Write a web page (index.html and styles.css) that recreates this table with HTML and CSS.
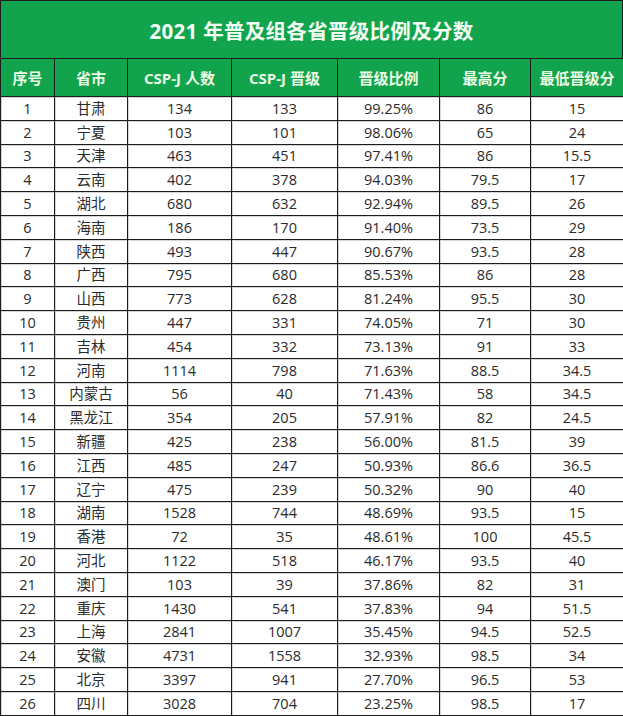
FILE: index.html
```html
<!DOCTYPE html>
<html lang="zh-CN">
<head>
<meta charset="utf-8">
<title>2021 年普及组各省晋级比例及分数</title>
<link rel="stylesheet" href="styles.css">
</head>
<body>
<div class="sheet">
  <div class="title">2021 年普及组各省晋级比例及分数</div>
  <table class="grid">
    <colgroup>
      <col class="c1"><col class="c2"><col class="c3"><col class="c4"><col class="c5"><col class="c6"><col class="c7">
    </colgroup>
    <thead>
      <tr class="head">
        <th>序号</th><th>省市</th><th>CSP-J 人数</th><th>CSP-J 晋级</th><th>晋级比例</th><th>最高分</th><th>最低晋级分</th>
      </tr>
    </thead>
    <tbody>
      <tr><td>1</td><td>甘肃</td><td>134</td><td>133</td><td>99.25%</td><td>86</td><td>15</td></tr>
      <tr><td>2</td><td>宁夏</td><td>103</td><td>101</td><td>98.06%</td><td>65</td><td>24</td></tr>
      <tr><td>3</td><td>天津</td><td>463</td><td>451</td><td>97.41%</td><td>86</td><td>15.5</td></tr>
      <tr><td>4</td><td>云南</td><td>402</td><td>378</td><td>94.03%</td><td>79.5</td><td>17</td></tr>
      <tr><td>5</td><td>湖北</td><td>680</td><td>632</td><td>92.94%</td><td>89.5</td><td>26</td></tr>
      <tr><td>6</td><td>海南</td><td>186</td><td>170</td><td>91.40%</td><td>73.5</td><td>29</td></tr>
      <tr><td>7</td><td>陕西</td><td>493</td><td>447</td><td>90.67%</td><td>93.5</td><td>28</td></tr>
      <tr><td>8</td><td>广西</td><td>795</td><td>680</td><td>85.53%</td><td>86</td><td>28</td></tr>
      <tr><td>9</td><td>山西</td><td>773</td><td>628</td><td>81.24%</td><td>95.5</td><td>30</td></tr>
      <tr><td>10</td><td>贵州</td><td>447</td><td>331</td><td>74.05%</td><td>71</td><td>30</td></tr>
      <tr><td>11</td><td>吉林</td><td>454</td><td>332</td><td>73.13%</td><td>91</td><td>33</td></tr>
      <tr><td>12</td><td>河南</td><td>1114</td><td>798</td><td>71.63%</td><td>88.5</td><td>34.5</td></tr>
      <tr><td>13</td><td>内蒙古</td><td>56</td><td>40</td><td>71.43%</td><td>58</td><td>34.5</td></tr>
      <tr><td>14</td><td>黑龙江</td><td>354</td><td>205</td><td>57.91%</td><td>82</td><td>24.5</td></tr>
      <tr><td>15</td><td>新疆</td><td>425</td><td>238</td><td>56.00%</td><td>81.5</td><td>39</td></tr>
      <tr><td>16</td><td>江西</td><td>485</td><td>247</td><td>50.93%</td><td>86.6</td><td>36.5</td></tr>
      <tr><td>17</td><td>辽宁</td><td>475</td><td>239</td><td>50.32%</td><td>90</td><td>40</td></tr>
      <tr><td>18</td><td>湖南</td><td>1528</td><td>744</td><td>48.69%</td><td>93.5</td><td>15</td></tr>
      <tr><td>19</td><td>香港</td><td>72</td><td>35</td><td>48.61%</td><td>100</td><td>45.5</td></tr>
      <tr><td>20</td><td>河北</td><td>1122</td><td>518</td><td>46.17%</td><td>93.5</td><td>40</td></tr>
      <tr><td>21</td><td>澳门</td><td>103</td><td>39</td><td>37.86%</td><td>82</td><td>31</td></tr>
      <tr><td>22</td><td>重庆</td><td>1430</td><td>541</td><td>37.83%</td><td>94</td><td>51.5</td></tr>
      <tr><td>23</td><td>上海</td><td>2841</td><td>1007</td><td>35.45%</td><td>94.5</td><td>52.5</td></tr>
      <tr><td>24</td><td>安徽</td><td>4731</td><td>1558</td><td>32.93%</td><td>98.5</td><td>34</td></tr>
      <tr><td>25</td><td>北京</td><td>3397</td><td>941</td><td>27.70%</td><td>96.5</td><td>53</td></tr>
      <tr><td>26</td><td>四川</td><td>3028</td><td>704</td><td>23.25%</td><td>98.5</td><td>17</td></tr>
    </tbody>
  </table>
</div>
</body>
</html>
```

FILE: styles.css
```css
html, body {
  margin: 0;
  padding: 0;
  background: #ffffff;
}

.sheet {
  width: 623px;
  font-family: "Open Sans", "Noto Sans CJK SC", sans-serif;
}

.title {
  box-sizing: border-box;
  height: 58px;
  background: #12a44c;
  color: #f4fff4;
  font-size: 20.5px;
  font-weight: 700;
  display: flex;
  align-items: center;
  justify-content: center;
  border: 1px solid #1c1c1c;
  border-bottom: none;
  letter-spacing: 0.3px;
}

.grid {
  width: 623px;
  border-collapse: collapse;
  table-layout: fixed;
}

.c1 { width: 54px; }
.c2 { width: 73px; }
.c3 { width: 104px; }
.c4 { width: 106px; }
.c5 { width: 102px; }
.c6 { width: 91px; }
.c7 { width: 93px; }

.grid th,
.grid td {
  border: 1px solid #1c1c1c;
  padding: 0;
  text-align: center;
  white-space: nowrap;
}

.head {
  height: 38px;
}

.grid th {
  background: #12a44c;
  color: #eafbe6;
  font-size: 15px;
  font-weight: 700;
}

.grid tbody tr {
  height: 23.8px;
}

.grid td {
  color: #2b2b2b;
  font-size: 14.5px;
  line-height: 19px;
  box-shadow: inset 1px 1px 0 #d6d6d6;
}
```
